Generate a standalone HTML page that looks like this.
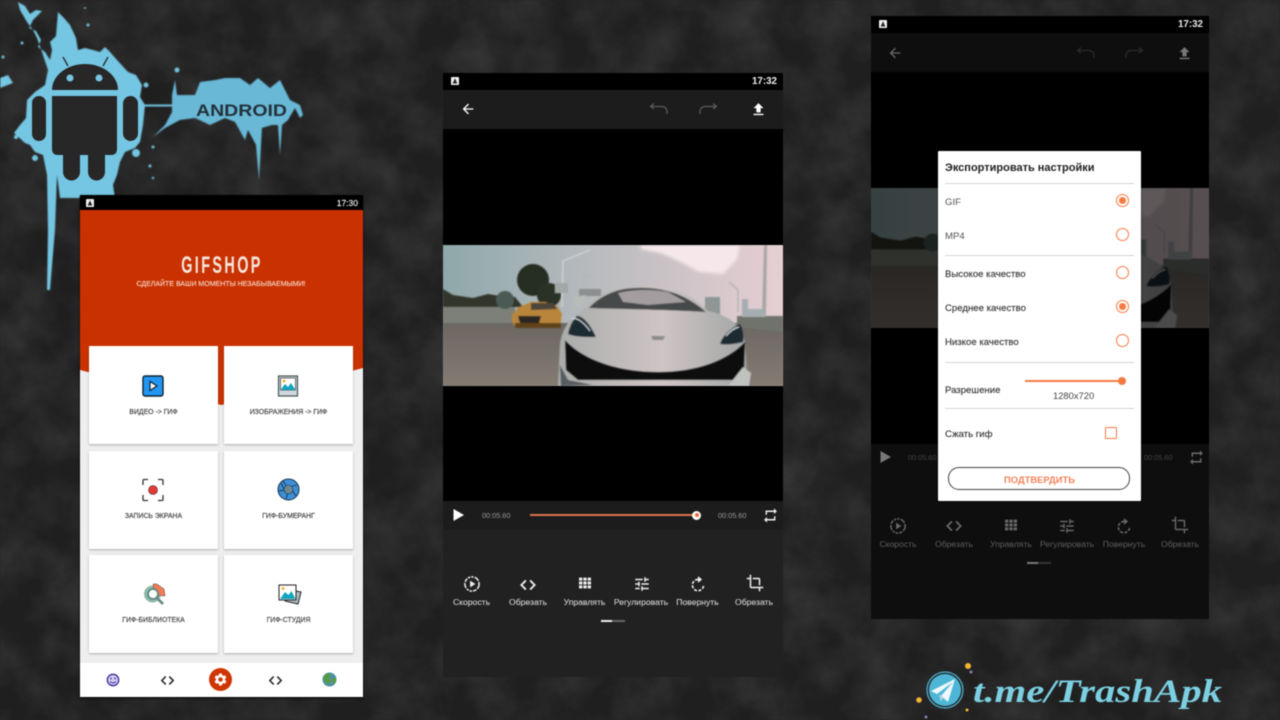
<!DOCTYPE html>
<html lang="ru"><head><meta charset="utf-8"><title>GifShop</title>
<style>
html,body{margin:0;padding:0;width:1280px;height:720px;overflow:hidden;background:#232323}
#w{position:absolute;left:0;top:0;width:1280px;height:720px;overflow:hidden;filter:blur(.5px);font-family:"Liberation Sans","Noto Sans CJK SC",sans-serif}
#w div,#w svg{position:absolute}
.t{white-space:nowrap;line-height:1}
.c{transform:translateX(-50%)}
.card{background:#fff;width:129px;height:98px;box-shadow:0 1px 2px rgba(0,0,0,.28)}
.cl{font-size:6.9px;color:#4a4a4a;-webkit-text-stroke:.2px #4a4a4a}
.lb{font-size:8.6px;color:#d0d0d0;-webkit-text-stroke:.1px #d0d0d0}
.dim{color:#5f5f5f;-webkit-text-stroke:0}
.dlg{font-size:9.6px;color:#3a3a3a;-webkit-text-stroke:.15px #3a3a3a}
.hr{height:1px;background:#d4d4d4;left:945px;width:189px}
.radio{width:11px;height:11px;border:1.4px solid #f57a42;border-radius:50%;left:1115.5px}
.radio.on::after{content:"";position:absolute;left:2px;top:2px;width:7px;height:7px;background:#f57a42;border-radius:50%}
</style></head><body><div id="w">
<svg width="0" height="0" style="left:0;top:0"><defs>
<filter id="grain" x="0" y="0" width="100%" height="100%"><feTurbulence type="fractalNoise" baseFrequency=".022" numOctaves="6" seed="7"/><feColorMatrix values="0 0 0 0 .6  0 0 0 0 .6  0 0 0 0 .6  .22 0 0 0 -.07"/></filter>
<filter id="b1"><feGaussianBlur stdDeviation=".5"/></filter>
<filter id="b2"><feGaussianBlur stdDeviation="1.6"/></filter>
<symbol id="back" viewBox="0 0 24 24"><path fill="currentColor" d="M20 11H7.83l5.59-5.59L12 4l-8 8 8 8 1.41-1.41L7.83 13H20v-2z"/></symbol>
<symbol id="undo" viewBox="0 0 20 14"><path fill="none" stroke="currentColor" stroke-width="1.3" d="M5 1.500L1.500 4.500 5 7M1.500 4.500H13a5 5 0 0 1 5 5V12"/></symbol>
<symbol id="redo" viewBox="0 0 20 14"><path fill="none" stroke="currentColor" stroke-width="1.3" d="M15 1.500L18.500 4.500 15 7M18.500 4.500H7a5 5 0 0 0-5 5V12"/></symbol>
<symbol id="up" viewBox="0 0 24 24"><path fill="currentColor" d="M9 16h6v-6h4l-7-7-7 7h4v6zM5 18h14v2H5z"/></symbol>
<symbol id="loop" viewBox="0 0 24 24"><path fill="currentColor" d="M7 7h10v3l4-4-4-4v3H5v6h2V7zm10 10H7v-3l-4 4 4 4v-3h12v-6h-2v4z"/></symbol>
<symbol id="speed" viewBox="0 0 24 24"><circle cx="12" cy="12" r="9.500" fill="none" stroke="currentColor" stroke-width="2" stroke-dasharray="7 1.500 5 1.500 3 1.500 3 1.500"/><path fill="currentColor" d="M9.500 7.500v9l7-4.500z"/></symbol>
<symbol id="code" viewBox="0 0 24 24"><path fill="none" stroke="currentColor" stroke-width="2.200" d="M9.500 6.500L4 12l5.500 5.500M14.500 6.500L20 12l-5.500 5.500"/></symbol>
<symbol id="grid" viewBox="0 0 24 24"><path fill="currentColor" d="M3 4h5v4.500H3zM9.500 4h5v4.500h-5zM16 4h5v4.500h-5zM3 9.800h5v4.500H3zM9.500 9.800h5v4.500h-5zM16 9.800h5v4.500h-5zM3 15.600h5v4.500H3zM9.500 15.600h5v4.500h-5zM16 15.600h5v4.500h-5z"/></symbol>
<symbol id="tune" viewBox="0 0 24 24"><path fill="currentColor" d="M3 17v2h6v-2H3zM3 5v2h10V5H3zm10 16v-2h8v-2h-8v-2h-2v6h2zM7 9v2H3v2h4v2h2V9H7zm14 4v-2H11v2h10zm-6-4h2V7h4V5h-4V3h-2v6z"/></symbol>
<symbol id="rot" viewBox="0 0 24 24"><path fill="currentColor" d="M12 1.500l5.500 4.500-5.500 4.500V7.200z"/><path fill="none" stroke="currentColor" stroke-width="2.200" stroke-dasharray="4 2" d="M12 6a7.500 7.500 0 1 0 7.500 7.500"/></symbol>
<symbol id="crop" viewBox="0 0 24 24"><path fill="currentColor" d="M17 15h2V7c0-1.100-.9-2-2-2H9v2h8v8zM7 17V1H5v4H1v2h4v10c0 1.100.9 2 2 2h10v4h2v-4h4v-2H7z"/></symbol>
<symbol id="gear" viewBox="0 0 24 24"><path fill="currentColor" d="M19.140 12.940c.04-.3.06-.61.06-.94 0-.32-.02-.64-.07-.94l2.030-1.580c.18-.14.23-.41.12-.61l-1.920-3.320c-.12-.22-.37-.29-.59-.22l-2.390.96c-.5-.38-1.030-.7-1.620-.94l-.36-2.540c-.04-.24-.24-.41-.48-.41h-3.840c-.24 0-.43.17-.47.41l-.36 2.540c-.59.24-1.130.57-1.620.94l-2.390-.96c-.22-.08-.47 0-.59.22L2.740 8.870c-.12.21-.08.47.12.61l2.030 1.580c-.05.3-.09.63-.09.94s.02.64.07.94l-2.030 1.580c-.18.14-.23.41-.12.61l1.920 3.320c.12.22.37.29.59.22l2.390-.96c.5.38 1.030.7 1.620.94l.36 2.540c.05.24.24.41.48.41h3.840c.24 0 .44-.17.47-.41l.36-2.540c.59-.24 1.130-.56 1.620-.94l2.390.96c.22.08.47 0 .59-.22l1.920-3.320c.12-.22.07-.47-.12-.61l-2.010-1.580zM12 15.600c-1.980 0-3.600-1.620-3.600-3.600s1.620-3.600 3.600-3.600 3.600 1.620 3.600 3.600-1.620 3.600-3.600 3.600z"/></symbol>
<symbol id="stat" viewBox="0 0 8 8"><rect width="8" height="8" rx=".8" fill="#eee"/><path d="M4 1.300L6.300 6.500H1.700z" fill="#222"/></symbol>
<symbol id="scene" viewBox="0 0 340 141" preserveAspectRatio="none">
<defs><linearGradient id="sky" x1="0" x2="1" y1="0" y2="0"><stop offset="0" stop-color="#8ea8aa"/><stop offset=".45" stop-color="#b9bbbe"/><stop offset="1" stop-color="#e6cfd3"/></linearGradient>
<linearGradient id="road" x1="0" x2="0" y1="0" y2="1"><stop offset="0" stop-color="#6c6762"/><stop offset="1" stop-color="#857b73"/></linearGradient>
<linearGradient id="hood" x1="0" x2="1" y1="0" y2="0"><stop offset="0" stop-color="#a8aca9"/><stop offset=".55" stop-color="#cfc4c5"/><stop offset="1" stop-color="#a0a5a3"/></linearGradient></defs>
<rect width="340" height="141" fill="url(#sky)"/>
<path d="M197 0h100l-3 14-14 15-24-2-18-10-18-8-22-5z" fill="#f6e8ea" filter="url(#b2)"/>
<g filter="url(#b1)">
<rect x="0" y="78" width="340" height="63" fill="url(#road)"/>
<path d="M0 61h72v17H0z" fill="#7b8078"/><path d="M294 71h46v16l-46-5z" fill="#6f736c"/>
<path d="M0 44l10 6 20 3 15-4 12 2 15 1 8 10H0z" fill="#30352c"/>
<circle cx="62" cy="55" r="9" fill="#4b5a55"/><circle cx="90" cy="35" r="16" fill="#262d23"/><circle cx="106" cy="50" r="12" fill="#2a3026"/>
<path d="M119 62l1-46 27-11" stroke="#d5d5d8" stroke-width="1.200" fill="none"/><path d="M139 45l1-12 12-5" stroke="#b4b4b8" fill="none"/><rect x="112" y="38" width="13" height="10" fill="#a2a8a6"/><rect x="136" y="44" width="22" height="7" fill="#8b8f8f"/>
<path d="M321 0h3l-1 70h-4z" fill="#a9a6a2"/><path d="M295 67V45l-9-8" stroke="#aaa" fill="none"/>
<path d="M299 70V54h6v10h17v8h-23z" fill="#a6adb0"/><path d="M262 52h15v20h-15z" fill="#8d9597"/>
<path d="M69 70l7-8 12-5h14l12 4 5 8-2 13H72l-3-6z" fill="#b9853a"/><path d="M88 58h22l4 6-26 1z" fill="#4b453b"/><path d="M75 71h23l-2 7H77z" fill="#2b2722"/><path d="M72 78h46v5H72z" fill="#5f4216"/>
<path d="M130 52l13-2 1 9-13 2z" fill="#b7bcb9"/><path d="M262 56l11-1 2 11-11 2z" fill="#8f9694"/>
<path d="M115 141L117 100C119 84 127 72 140 66C150 54 165 42 195 41C235 40 250 52 265 66C285 70 299 80 302 98L305 141z" fill="url(#hood)"/>
<path d="M146 63C158 50 175 43 195 43C225 42 245 52 263 67C235 65 180 64 146 63z" fill="#45484a"/><path d="M175 48C190 44 210 44 225 47L243 57 205 60 180 57z" fill="#a39d9f"/>
<path d="M125 89C127 80 130 75 134 71C142 72 148 82 153 92C143 92 132 92 125 89z" fill="#1e2a33"/><path d="M277 99C280 90 288 83 297 79C300 84 301 92 300 97C292 99 284 100 277 99z" fill="#1e2a33"/>
<path d="M129 74C133 72 140 76 147 86" stroke="#e8eef2" stroke-width="1" fill="none"/><path d="M283 91C287 86 292 83 296 82" stroke="#e8eef2" stroke-width="1" fill="none"/>
<path d="M122 95C140 115 175 127 215 127C255 127 285 115 302 97L301 125 296 135H135L123 125z" fill="#0e1010"/>
<path d="M117 120L125 135 150 140 118 141z" fill="#555b5e"/><path d="M300 122L308 128 306 141 285 141z" fill="#c0c2c0"/>
<path d="M208 91h14l-2 4h-10z" fill="#8b8b88"/>
</g></symbol>
</defs></svg>

<!-- grunge background -->
<svg width="1280" height="720" style="left:0;top:0"><rect width="1280" height="720" fill="#1f1f1f"/><rect width="1280" height="720" filter="url(#grain)"/></svg>

<!-- Android splash logo -->
<svg width="320" height="300" style="left:0;top:0" viewBox="0 0 320 300">
<g fill="#74c6e2" filter="url(#b1)">
<path d="M18 2L25 6 30 14 36 10 42 11 33 20 29 28 36 31 41 40 38 47 45 52 50 60 52 50 50 42 56 36 58 12 64 18 70 25 76 38 78 50 85 48 93 50 100 52 105 47 110 52 117 60 128 72 136 75 142 85 140 97 145 105 143 125 140 142 135 148 125 152 120 162 117 175 113 185 115 198 60 198 57 175 55 230 50 290 47 290 48 230 47 175 43 155 35 152 30 145 25 143 14 133 20 125 26 118 27 100 35 92 45 85 48 70 42 52 37 38 33 30 27 22 20 10z"/>
<path d="M143 104.500h35v2h-35z"/>
<path d="M153 137L165 125 172 112 172 95 175 80 177 95 195 95 200 82 215 80 225 78 240 78 250 85 258 78 270 88 280 80 290 100 300 105 303 115 300 118 295 108 288 120 282 125 280 155 278 125 272 125 262 128 259 180 256 145 248 130 245 140 235 122 225 118 210 125 195 118 180 120 165 128z" fill="#67b8d6"/>
<circle cx="35" cy="158" r="3"/><circle cx="136" cy="153" r="4"/><path d="M0 78l8-3 5 8-13 5z"/><circle cx="146" cy="85" r="2.500"/><circle cx="153" cy="147" r="1.500"/><circle cx="150" cy="166" r="1.500"/><circle cx="153" cy="178" r="1.200"/><circle cx="22" cy="43" r="1.500"/><circle cx="3" cy="57" r="1.500"/><circle cx="88" cy="25" r="1.500"/><circle cx="177" cy="70" r="2.500"/><circle cx="16" cy="137" r="2"/><circle cx="85" cy="8" r="1"/>
</g>
<g fill="#272728">
<path d="M52 90a33 26 0 0 1 66 0z"/>
<path d="M52 96h65v53q0 6-6 6h-6v17a8.500 8.500 0 0 1-17 0v-17h-8v17a8.500 8.500 0 0 1-17 0v-17h-5q-6 0-6-6z"/>
<rect x="32" y="96" width="14" height="45" rx="7"/><rect x="123" y="96" width="15" height="45" rx="7.500"/>
<path d="M63 57l5 9M108 57l-5 9" stroke="#272728" stroke-width="1.300"/>
</g>
<circle cx="70" cy="78" r="3.500" fill="#74c6e2"/><circle cx="99" cy="78" r="3.500" fill="#74c6e2"/>
<text x="196" y="116" font-family="Liberation Sans" font-weight="bold" font-size="16.5" fill="#24323c" textLength="91" lengthAdjust="spacingAndGlyphs">ANDROID</text>
</svg>

<!-- PHONE 1 -->
<div style="left:80px;top:195px;width:283px;height:502px;background:#eee;box-shadow:0 1px 2px #000"></div>
<div style="left:80px;top:210px;width:283px;height:195px;background:#c93200;clip-path:polygon(0 0,100% 0,100% 158px,141.5px 195px,0 160px)"></div>
<div style="left:80px;top:195px;width:283px;height:15px;background:#000"></div>
<svg width="8" height="8" style="left:86px;top:199px"><use href="#stat"/></svg>
<div class="t" style="right:922px;top:199px;font-size:8.5px;color:#eee;-webkit-text-stroke:.15px #eee">17:30</div>
<div class="t c" style="left:222px;top:254px;font-size:24px;font-weight:bold;color:#f4e6df;letter-spacing:4px;transform:translateX(-50%) scaleX(.6)">GIFSHOP</div>
<div class="t c" style="left:221px;top:280.500px;font-size:7px;color:#f5d8cc;-webkit-text-stroke:.1px #f5d8cc">СДЕЛАЙТЕ ВАШИ МОМЕНТЫ НЕЗАБЫВАЕМЫМИ!</div>

<div class="card" style="left:89px;top:346px"></div><div class="card" style="left:224px;top:346px"></div>
<div class="card" style="left:89px;top:451px"></div><div class="card" style="left:224px;top:451px"></div>
<div class="card" style="left:89px;top:555px"></div><div class="card" style="left:224px;top:555px"></div>

<svg width="22" height="22" style="left:142px;top:375px" viewBox="0 0 22 22"><rect x="1" y="1" width="20" height="20" rx="2" fill="#2196f3" stroke="#10232f" stroke-width="1.400"/><path d="M8 6.500v9l7-4.500z" fill="#fff" stroke="#10232f" stroke-width="1.200"/></svg>
<svg width="22" height="22" style="left:277px;top:375px" viewBox="0 0 22 22"><rect x="1.500" y="1" width="19" height="20" fill="#cfd8dc" stroke="#455" stroke-width="1.200"/><rect x="3.500" y="3" width="15" height="12" fill="#fff" stroke="#333" stroke-width=".7"/><path d="M3.500 15l4.500-6 3 3 3-4 4.500 7z" fill="#12a5bd"/><circle cx="7" cy="6" r="1.500" fill="#f5b32e"/></svg>
<svg width="24" height="24" style="left:141px;top:478px" viewBox="0 0 24 24"><path d="M2 7V2.500a1 1 0 0 1 1-1H7M17 1.500h4a1 1 0 0 1 1 1V7M22 17v4.500a1 1 0 0 1-1 1h-4M7 22.500H3a1 1 0 0 1-1-1V17" fill="none" stroke="#333" stroke-width="1.300"/><circle cx="12" cy="12" r="4.500" fill="#e53935" stroke="#333" stroke-width=".6"/></svg>
<svg width="23" height="23" style="left:277px;top:478px" viewBox="0 0 23 23"><circle cx="11.500" cy="11.500" r="10.500" fill="#3f8fd6" stroke="#12344f" stroke-width="1"/><path d="M6 3l4 6M20 7l-7 2M19 18l-4-6M9 21l2-7M2 13l6-1M4 5l3 6" stroke="#12344f" stroke-width=".9"/><circle cx="11.500" cy="11.500" r="4.500" fill="#6f8794" stroke="#12344f" stroke-width=".6"/></svg>
<svg width="24" height="24" style="left:143px;top:583px" viewBox="0 0 24 24"><circle cx="9.500" cy="11" r="8.500" fill="#8fb9a8"/><path d="M10 1l4 0 7 5 1 7-10-1z" fill="#f37b54" stroke="#444" stroke-width=".5"/><circle cx="10" cy="11" r="5" fill="#fff" stroke="#5f8a86" stroke-width="1.800"/><path d="M14 15l6 6" stroke="#6b8b8e" stroke-width="2.800"/></svg>
<svg width="24" height="22" style="left:278px;top:584px" viewBox="0 0 24 22"><path d="M8 5l15 3-3 12-13-3z" fill="#b0bec5" stroke="#222" stroke-width="1"/><rect x="1" y="1" width="17" height="15" fill="#fff" stroke="#222" stroke-width="1"/><path d="M2 15l5-7 3.500 3 3-4 4 8z" fill="#12a5bd"/><circle cx="5" cy="4.500" r="1.500" fill="#f5b32e"/></svg>

<div class="t c cl" style="left:153.500px;top:409.500px">ВИДЕО -&gt; ГИФ</div>
<div class="t c cl" style="left:288.500px;top:409.500px">ИЗОБРАЖЕНИЯ -&gt; ГИФ</div>
<div class="t c cl" style="left:153.500px;top:513.500px">ЗАПИСЬ ЭКРАНА</div>
<div class="t c cl" style="left:288.500px;top:513.500px">ГИФ-БУМЕРАНГ</div>
<div class="t c cl" style="left:153.500px;top:617.500px">ГИФ-БИБЛИОТЕКА</div>
<div class="t c cl" style="left:288.500px;top:617.500px">ГИФ-СТУДИЯ</div>

<div style="left:80px;top:663px;width:283px;height:34px;background:#fff"></div>
<svg width="14" height="14" style="left:106px;top:673px" viewBox="0 0 14 14"><circle cx="7" cy="7" r="5.700" fill="#d5d0f0" stroke="#3a2a9a" stroke-width="1.300"/><circle cx="5" cy="5.500" r=".9" fill="#3a2a9a"/><circle cx="9" cy="5.500" r=".9" fill="#3a2a9a"/><path d="M4 8.500q3 3 6 0" stroke="#3a2a9a" fill="none"/></svg>
<svg width="17" height="17" style="left:158.500px;top:671.500px;color:#222"><use href="#code"/></svg>
<div style="left:209px;top:668px;width:23px;height:23px;border-radius:50%;background:#cf3500"></div>
<svg width="15" height="15" style="left:213px;top:672px;color:#fff"><use href="#gear"/></svg>
<svg width="17" height="17" style="left:266.500px;top:671.500px;color:#222"><use href="#code"/></svg>
<svg width="15" height="15" style="left:322px;top:672px" viewBox="0 0 15 15"><circle cx="7.500" cy="7.500" r="7" fill="#4a93a6"/><path d="M2 4l4-3 3 2-2 3 2 3-3 4-2-3-2-1zM10 6l4 0 0 4-3 2z" fill="#5a9a3e"/></svg>

<!-- PHONE 2 -->
<div style="left:443px;top:73px;width:340px;height:604px;background:#212121"></div>
<div style="left:443px;top:73px;width:340px;height:17px;background:#000"></div>
<svg width="8" height="8" style="left:451px;top:77px"><use href="#stat"/></svg>
<div class="t" style="right:503px;top:77px;font-size:9.8px;color:#eee;font-weight:bold">17:32</div>
<div style="left:443px;top:90px;width:340px;height:39px;background:#1c1c1c"></div>
<svg width="16" height="16" style="left:460px;top:101px;color:#fff"><use href="#back"/></svg>
<svg width="20" height="14" style="left:649px;top:102px;color:#5a5a5a"><use href="#undo"/></svg>
<svg width="20" height="14" style="left:698px;top:102px;color:#5a5a5a"><use href="#redo"/></svg>
<svg width="17" height="17" style="left:749.500px;top:101px;color:#fff"><use href="#up"/></svg>
<div style="left:443px;top:129px;width:340px;height:372px;background:#000"></div>
<svg width="340" height="141" style="left:443px;top:245px"><use href="#scene" width="340" height="141"/></svg>
<div style="left:443px;top:501px;width:340px;height:29px;background:#1c1c1c"></div>
<svg width="14" height="14" style="left:452px;top:508px" viewBox="0 0 14 14"><path d="M1.500 1v12L12 7z" fill="#fff"/></svg>
<div class="t" style="left:482px;top:512px;font-size:7.3px;color:#999">00:05.60</div>
<div style="left:530px;top:514px;width:167px;height:2px;background:#d9754b"></div>
<div style="left:692px;top:510.500px;width:9px;height:9px;border-radius:50%;background:#fff"></div>
<div style="left:694.500px;top:513px;width:4px;height:4px;border-radius:50%;background:#e8703c"></div>
<div class="t" style="left:718px;top:512px;font-size:7.3px;color:#999">00:05.60</div>
<svg width="17" height="17" style="left:762px;top:506.500px;color:#eee"><use href="#loop"/></svg>

<svg width="18" height="18" style="left:462.500px;top:574.500px;color:#eee"><use href="#speed"/></svg>
<svg width="20" height="20" style="left:518px;top:575px;color:#eee"><use href="#code"/></svg>
<svg width="16" height="16" style="left:577px;top:575px;color:#eee"><use href="#grid"/></svg>
<svg width="18" height="18" style="left:632.500px;top:574.500px;color:#eee"><use href="#tune"/></svg>
<svg width="18" height="18" style="left:689px;top:574.500px;color:#eee"><use href="#rot"/></svg>
<svg width="18" height="18" style="left:746px;top:574px;color:#eee"><use href="#crop"/></svg>
<div class="t c lb" style="left:471.500px;top:597.500px">Скорость</div>
<div class="t c lb" style="left:528px;top:597.500px">Обрезать</div>
<div class="t c lb" style="left:584.500px;top:597.500px">Управлять</div>
<div class="t c lb" style="left:641px;top:597.500px">Регулировать</div>
<div class="t c lb" style="left:697.500px;top:597.500px">Повернуть</div>
<div class="t c lb" style="left:754px;top:597.500px">Обрезать</div>
<div style="left:601px;top:620px;width:11px;height:2px;background:#eee"></div><div style="left:612px;top:620px;width:13px;height:1.500px;background:#666"></div>

<!-- PHONE 3 -->
<div style="left:871px;top:16px;width:338px;height:603px;background:#0e0e0e"></div>
<div style="left:871px;top:16px;width:338px;height:17px;background:#000"></div>
<svg width="8" height="8" style="left:879px;top:20px"><use href="#stat"/></svg>
<div class="t" style="right:77px;top:20px;font-size:9.8px;color:#e8e8e8;font-weight:bold">17:32</div>
<svg width="16" height="16" style="left:887px;top:45px;color:#666"><use href="#back"/></svg>
<svg width="20" height="14" style="left:1076px;top:46px;color:#2a2a2a"><use href="#undo"/></svg>
<svg width="20" height="14" style="left:1124px;top:46px;color:#2a2a2a"><use href="#redo"/></svg>
<svg width="17" height="17" style="left:1175.500px;top:45px;color:#777"><use href="#up"/></svg>
<div style="left:871px;top:72px;width:338px;height:372px;background:#000"></div>
<svg width="338" height="140" style="left:871px;top:188px;opacity:.38"><use href="#scene" width="338" height="140"/></svg>
<svg width="14" height="14" style="left:879px;top:450px" viewBox="0 0 14 14"><path d="M1.500 1v12L12 7z" fill="#777"/></svg>
<div class="t" style="left:908px;top:454px;font-size:7.3px;color:#444">00:05.60</div>
<div class="t" style="left:1144px;top:454px;font-size:7.3px;color:#444">00:05.60</div>
<svg width="17" height="17" style="left:1188px;top:449px;color:#6b6b6b"><use href="#loop"/></svg>
<svg width="18" height="18" style="left:889px;top:516.500px;color:#666"><use href="#speed"/></svg>
<svg width="20" height="20" style="left:944px;top:516px;color:#666"><use href="#code"/></svg>
<svg width="16" height="16" style="left:1003px;top:517px;color:#666"><use href="#grid"/></svg>
<svg width="18" height="18" style="left:1058px;top:516.500px;color:#666"><use href="#tune"/></svg>
<svg width="18" height="18" style="left:1115px;top:516.500px;color:#666"><use href="#rot"/></svg>
<svg width="18" height="18" style="left:1171px;top:516px;color:#666"><use href="#crop"/></svg>
<div class="t c lb dim" style="left:898px;top:540px">Скорость</div>
<div class="t c lb dim" style="left:954px;top:540px">Обрезать</div>
<div class="t c lb dim" style="left:1011px;top:540px">Управлять</div>
<div class="t c lb dim" style="left:1067px;top:540px">Регулировать</div>
<div class="t c lb dim" style="left:1124px;top:540px">Повернуть</div>
<div class="t c lb dim" style="left:1180px;top:540px">Обрезать</div>
<div style="left:1027px;top:562px;width:11px;height:2px;background:#777"></div><div style="left:1038px;top:562px;width:13px;height:1.500px;background:#333"></div>

<!-- Dialog -->
<div style="left:938px;top:151px;width:203px;height:350px;background:#fff;border-radius:1px;box-shadow:0 0 2px rgba(0,0,0,.6)"></div>
<div class="t" style="left:945px;top:163px;font-size:11px;font-weight:bold;color:#222">Экспортировать настройки</div>
<div class="hr" style="top:183px"></div>
<div class="t dlg" style="left:945px;top:198px;color:#555;-webkit-text-stroke:0">GIF</div><div class="radio on" style="top:194px"></div>
<div class="t dlg" style="left:945px;top:232px;color:#555;-webkit-text-stroke:0">MP4</div><div class="radio" style="top:228px"></div>
<div class="hr" style="top:255px"></div>
<div class="t dlg" style="left:945px;top:270px">Высокое качество</div><div class="radio" style="top:266px"></div>
<div class="t dlg" style="left:945px;top:304px">Среднее качество</div><div class="radio on" style="top:300px"></div>
<div class="t dlg" style="left:945px;top:338px">Низкое качество</div><div class="radio" style="top:334px"></div>
<div class="hr" style="top:362px"></div>
<div class="t dlg" style="left:945px;top:386px">Разрешение</div>
<div style="left:1025px;top:380px;width:98px;height:2px;background:#f57a42"></div>
<div style="left:1118px;top:377px;width:8px;height:8px;border-radius:50%;background:#f57a42"></div>
<div class="t" style="left:1053px;top:390.500px;font-size:9.4px;color:#444">1280x720</div>
<div class="hr" style="top:408px"></div>
<div class="t dlg" style="left:945px;top:430px">Сжать гиф</div>
<div style="left:1105px;top:427px;width:10px;height:10px;border:1.500px solid #f57a42;border-radius:1px"></div>
<div style="left:948px;top:467px;width:180px;height:21px;border:1.300px solid #444;border-radius:11px"></div>
<div class="t c" style="left:1039.500px;top:475px;font-size:9.4px;font-weight:bold;color:#f2825a">ПОДТВЕРДИТЬ</div>

<!-- Telegram -->
<svg width="320" height="65" style="left:910px;top:655px" viewBox="0 0 320 65">
<circle cx="58" cy="11" r="3" fill="#f2b632"/><circle cx="61" cy="17" r="1.500" fill="#8a7fb0"/><circle cx="9" cy="45" r="2.800" fill="#f2b632"/><circle cx="57" cy="55" r="1.500" fill="#f2b632"/><circle cx="16" cy="62" r="1.500" fill="#8a7fb0"/>
<circle cx="35" cy="35" r="16" fill="#4db6d6"/><circle cx="35" cy="35" r="18" fill="none" stroke="#4db6d6" stroke-width="1.200"/>
<path d="M21 36L45 24 38 47 31 41 43 27 27 39z" fill="#eef7fb"/><path d="M29 39.500l2 7 2.500-4.500z" fill="#b9d4de"/>
<text x="63" y="47" font-family="Liberation Serif" font-weight="bold" font-style="italic" font-size="33" fill="#7cd0e2" textLength="249" lengthAdjust="spacingAndGlyphs">t.me/TrashApk</text>
</svg>
</div></body></html>
